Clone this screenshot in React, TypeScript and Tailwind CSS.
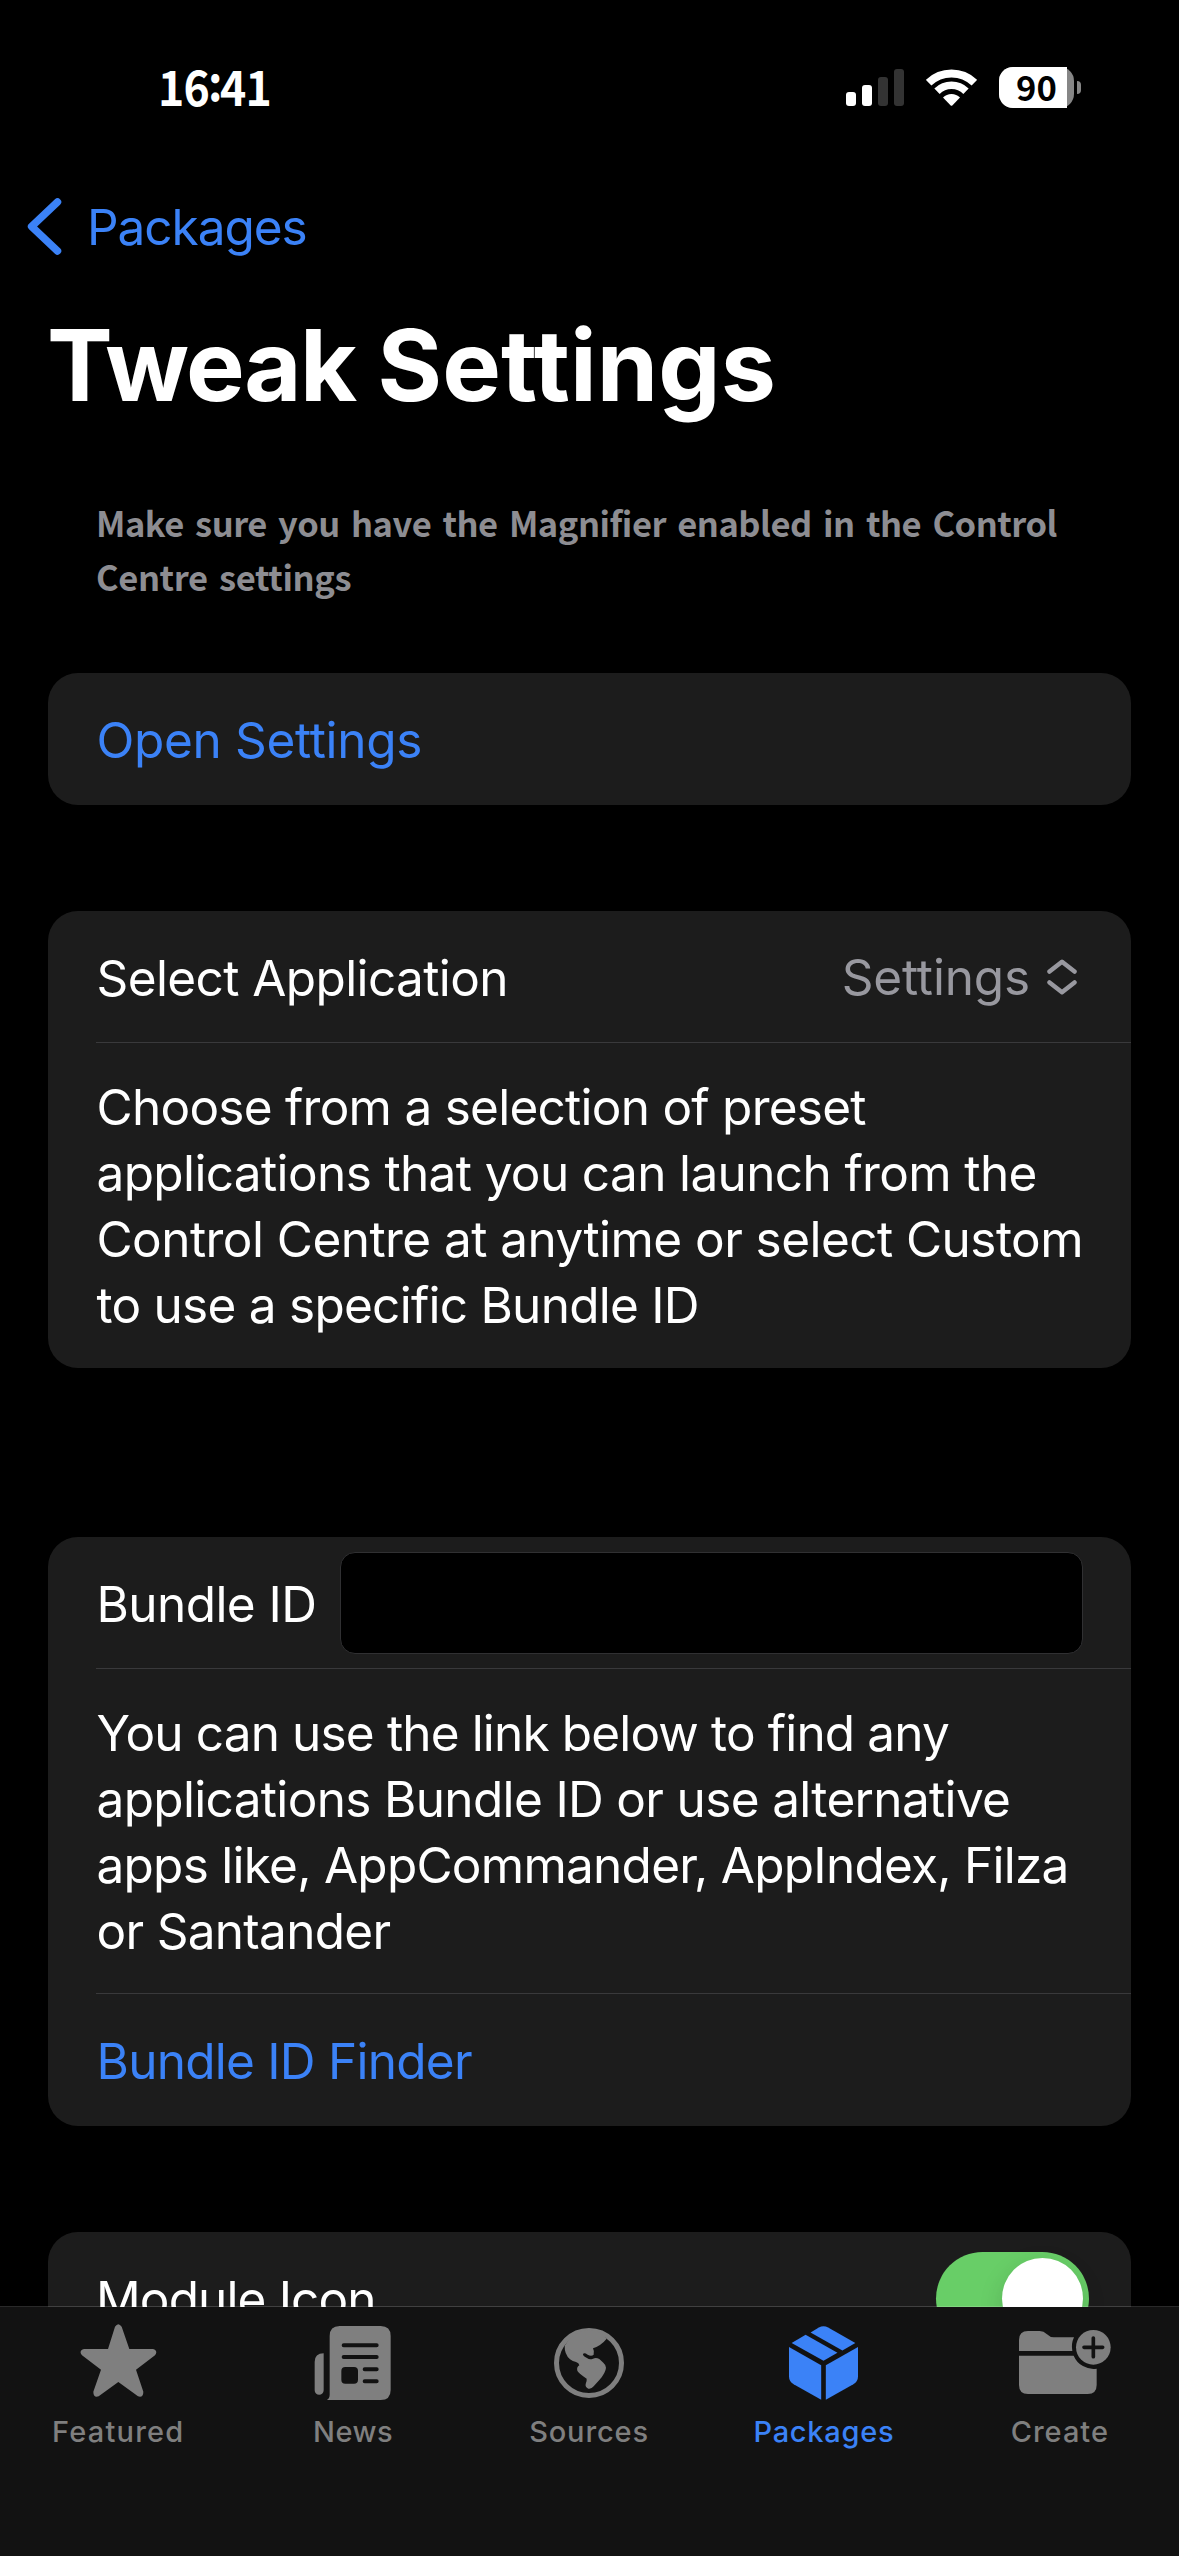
import type { ReactNode } from 'react';

const sans = "font-['Inter',sans-serif]";
const round = "font-['Noto_Sans_CJK_JP',sans-serif]";

function StatusBar() {
  return (
    <div className={`flex h-[156px] items-start pt-[49px] pl-[158px] pr-[98px] ${round}`}>
      <div className="flex h-[71px] origin-left scale-x-91 text-[49px] leading-[71px] font-bold whitespace-nowrap text-white">
        <span className="tracking-[-1px]">16</span>
        <span className="relative -top-[5px] -left-px tracking-[-3.5px]">:</span>
        <span className="tracking-[-1px]">41</span>
      </div>
      <div className="ml-auto flex items-start pt-[18px]">
        <div className="mt-[2px] flex h-[37px] items-end gap-[6px]">
          <div className="h-[14px] w-[10px] rounded-[3px] bg-white" />
          <div className="h-[21px] w-[10px] rounded-[3px] bg-white" />
          <div className="h-[29px] w-[10px] rounded-[3px] bg-[#333333]" />
          <div className="h-[37px] w-[10px] rounded-[3px] bg-[#333333]" />
        </div>
        <svg className="mt-[2px] ml-[22px]" width="51" height="37" viewBox="0 0 51 37" fill="none" stroke="#fff">
          <path d="M2.6 13.7A33 33 0 0 1 48.4 13.7" strokeWidth="8" />
          <path d="M11 22.2A20.8 20.8 0 0 1 40 22.2" strokeWidth="7.6" />
          <path d="M17 28.6A12 12 0 0 1 34 28.6L26.3 36.5Q25.5 37.2 24.7 36.5Z" fill="#fff" stroke="none" />
        </svg>
        <div className="ml-[22px] flex h-[41px] w-[75px] rounded-[14px] bg-[#868686]">
          <div className="h-[41px] w-[68px] rounded-l-[14px] bg-white pl-[17px] text-[34.6px] leading-[38px] font-bold text-black">90</div>
        </div>
        <div className="mt-[14px] ml-[3px] h-[13px] w-[4px] rounded-r-full bg-[#868686]" />
      </div>
    </div>
  );
}

function Card({ children, className = '' }: { children: ReactNode; className?: string }) {
  return <section className={`mx-[48px] overflow-hidden rounded-[30px] bg-[#1c1c1c] ${className}`}>{children}</section>;
}

function Divider() {
  return <div className="ml-[48px] h-px bg-[#39393b]" />;
}

function Line({ children, className }: { children: ReactNode; className: string }) {
  return <span className={`block whitespace-nowrap ${className}`}>{children}</span>;
}

function Tab({ label, active, children, className = '' }: { label: string; active?: boolean; children: ReactNode; className?: string }) {
  return (
    <div className={`flex flex-1 flex-col items-center ${active ? 'text-[#3b82f7]' : 'text-[#7f7f7f]'}`}>
      <div className="flex h-[80px] items-center justify-center">{children}</div>
      <span className={`mt-[11px] text-[29px] leading-[35px] font-medium ${className}`}>{label}</span>
    </div>
  );
}

function StarIcon() {
  return (
    <svg className="mb-[5px] ml-px" width="77" height="73" viewBox="0 0 229 219" fill="currentColor">
      <path d="M104 8Q114 -7 124 8L147 75H218Q234 80 224 94L167 137L189 203Q189 222 173 217L114 174L55 217Q39 222 39 203L62 137L5 94Q-6 80 11 75H83Z" />
    </svg>
  );
}

function NewsIcon() {
  return (
    <svg className="mr-[2px]" width="77" height="74" viewBox="0 0 229 222" fill="currentColor">
      <path d="M28 82Q1 82 1 108V193A13.500 13.500 0 0 0 28 193Z" />
      <path d="M46 30Q46 0 76 0H199Q229 0 229 30V192Q229 222 199 222H37Q46 218 46 206Z" />
      <g className="stroke-[#121212]" strokeWidth="12" strokeLinecap="round">
        <path d="M88 57.500H187M88 93H187M151 129.500H187M151 165.500H187" />
      </g>
      <rect className="fill-[#121212]" x="81" y="123" width="50" height="50" rx="12" />
    </svg>
  );
}

function GlobeIcon() {
  return (
    <svg width="70" height="70" viewBox="0 0 210 210" fill="currentColor">
      <circle cx="105" cy="105" r="97.500" fill="none" stroke="currentColor" strokeWidth="15" />
      <path d="M32 53Q31 78 48 94Q56 101 66 102Q75 105 76 112Q67 118 70 128Q72 134 98 152Q99 160 95 168Q93 178 103 182Q112 184 119 175L136 156Q155 134 156 119Q156 111 148 104L136 93Q126 87 117 92Q107 97 99 90Q86 84 87 78Q91 73 101 80Q112 86 119 80Q122 71 117 61Q142 52 158 32Q135 6 105 6Q60 8 32 53Z" />
    </svg>
  );
}

function BoxIcon() {
  return (
    <svg width="69" height="74" viewBox="0 0 208 222" fill="currentColor">
      <path d="M65 19L90 4Q104 -3 118 4L200 51L161 73Z" />
      <path d="M8 51L50 26L146 80L104 104Z" />
      <path d="M0 63L97 118V222L14 175Q0 167 0 152Z" />
      <path d="M208 63L111 118V222L194 175Q208 167 208 152Z" />
    </svg>
  );
}

function FolderIcon() {
  return (
    <svg className="mb-[2px] ml-[11px]" width="92" height="64" viewBox="0 0 276 192" fill="currentColor">
      <path d="M0 63V30Q0 3 27 3H62Q74 3 84 13Q93 22 104 22H165A66 66 0 0 0 160 63Z" />
      <path d="M0 77H164A64.500 64.500 0 0 0 233 116V165Q233 192 206 192H27Q0 192 0 165Z" />
      <circle cx="223" cy="52" r="52" />
      <path className="stroke-[#121212]" d="M195 52H251M223 24V80" strokeWidth="11" strokeLinecap="round" />
    </svg>
  );
}

export default function App() {
  return (
    <div className={`relative h-[2556px] w-[1179px] overflow-hidden bg-black text-[49.5px] leading-[66px] font-normal text-white ${sans}`}>
      <StatusBar />

      <nav className="flex h-[149px] items-start pl-[27px] text-[#3b82f7]">
        <svg className="mt-[42px]" width="35" height="57" viewBox="0 0 35 57" fill="none" stroke="currentColor" strokeWidth="7.5" strokeLinecap="round" strokeLinejoin="round">
          <path d="M30.500 4L4.600 28.500L30.500 53" />
        </svg>
        <span className="mt-[41px] ml-[25px] leading-[60px] tracking-[-1.05px]">Packages</span>
      </nav>

      <h1 className="h-[120px] pl-[47px] text-[98.6px] leading-[120px] font-bold whitespace-nowrap">
        <span className="tracking-[-1.5px]">Tweak </span>
        <span className="tracking-[0.1px]">Settings</span>
      </h1>

      <p className={`mt-[70px] h-[108px] pl-[96px] text-[34.5px] leading-[54px] font-bold text-[#8d8d92] ${round}`}>
        <Line className="tracking-[-0.48px] [word-spacing:3.9px]">Make sure you have the Magnifier enabled in the Control</Line>
        <Line className="tracking-[-0.4px] [word-spacing:4px]">Centre settings</Line>
      </p>

      <Card className="mt-[70px] h-[132px]">
        <div className="px-[48.5px] pt-px leading-[132px] tracking-[-0.32px] text-[#3b82f7]">Open Settings</div>
      </Card>

      <Card className="mt-[106px] h-[457px]">
        <div className="flex h-[131px] items-center justify-between pr-[54px] pl-[48.5px]">
          <span className="pt-[3px] tracking-[-0.6px]">Select Application</span>
          <div className="flex items-center text-[#98989f]">
            <span className="tracking-[-0.16px]">Settings</span>
            <svg className="ml-[17px]" width="30" height="36" viewBox="0 0 30 36" fill="none" stroke="currentColor" strokeWidth="4.500" strokeLinecap="round" strokeLinejoin="round">
              <path d="M2.500 12.500L15 2.800L27.500 12.500M2.500 23.500L15 33.200L27.500 23.500" />
            </svg>
          </div>
        </div>
        <Divider />
        <p className="pt-[31px] pl-[48.5px]">
          <Line className="tracking-[-0.74px]">Choose from a selection of preset</Line>
          <Line className="tracking-[-0.63px]">applications that you can launch from the</Line>
          <Line className="tracking-[-0.55px]">Control Centre at anytime or select Custom</Line>
          <Line className="tracking-[-0.74px]">to use a specific Bundle ID</Line>
        </p>
      </Card>

      <Card className="mt-[169px] h-[589px]">
        <div className="flex h-[131px] items-center pr-[48px] pl-[48.5px]">
          <span className="w-[243.5px] pt-[3px] tracking-[-0.58px]">Bundle ID</span>
          <div className="h-[102px] flex-1 rounded-[15px] border border-[#303032] bg-black" />
        </div>
        <Divider />
        <p className="pt-[31px] pb-[29px] pl-[48.5px]">
          <Line className="tracking-[-0.85px]">You can use the link below to find any</Line>
          <Line className="tracking-[-0.66px]">applications Bundle ID or use alternative</Line>
          <Line className="tracking-[-0.74px]">apps like, AppCommander, AppIndex, Filza</Line>
          <Line className="tracking-[-0.7px]">or Santander</Line>
        </p>
        <Divider />
        <div className="pt-px pl-[48.5px] leading-[132px] tracking-[-0.74px] text-[#3b82f7]">Bundle ID Finder</div>
      </Card>

      <Card className="mt-[106px] h-[132px]">
        <div className="flex h-[133px] items-center justify-between pr-[42px] pl-[48px]">
          <span className="pt-px tracking-[-0.87px]">Module Icon</span>
          <div className="flex h-[93px] w-[153px] items-center justify-end rounded-full bg-[#68ce67] pr-[6px]">
            <div className="size-[81px] rounded-full bg-white shadow-[0_9px_24px_rgba(0,0,0,0.15)]" />
          </div>
        </div>
      </Card>

      <footer className="absolute inset-x-0 bottom-0 flex h-[250px] border-t border-white/16 bg-[#121212] bg-clip-padding pt-[16px] pr-[2px]">
        <Tab label="Featured" className="pl-px tracking-[1.2px]"><StarIcon /></Tab>
        <Tab label="News" className="tracking-[0.5px]"><NewsIcon /></Tab>
        <Tab label="Sources" className="pl-px tracking-[0.85px]"><GlobeIcon /></Tab>
        <Tab label="Packages" active className="tracking-[0.75px]"><BoxIcon /></Tab>
        <Tab label="Create" className="pl-px tracking-[1px]"><FolderIcon /></Tab>
      </footer>
    </div>
  );
}
